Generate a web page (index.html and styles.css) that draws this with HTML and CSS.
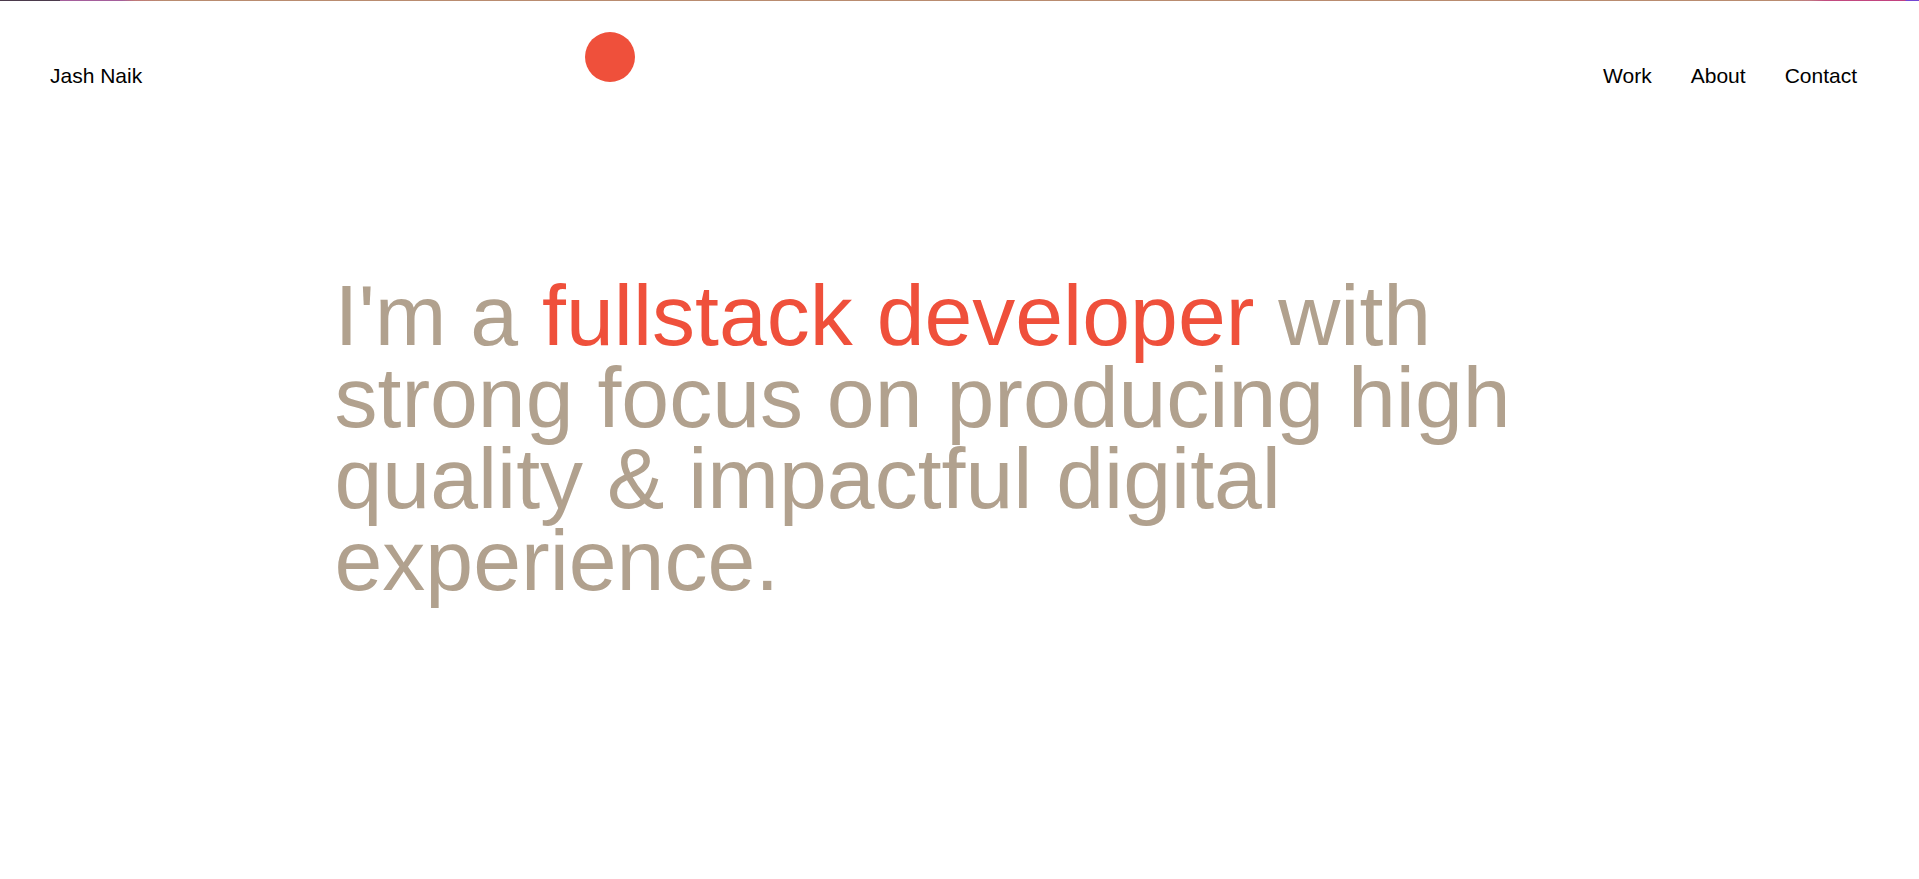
FILE: index.html
```html
<!DOCTYPE html>
<html lang="en">
<head>
<meta charset="utf-8">
<title>Jash Naik</title>
<link rel="stylesheet" href="styles.css">
</head>
<body>
<div class="progress"></div>
<header class="header">
  <a class="brand" href="#">Jash Naik</a>
  <nav class="nav">
    <a href="#">Work</a>
    <a href="#">About</a>
    <a href="#">Contact</a>
  </nav>
</header>
<div class="cursor"></div>
<main class="hero">
  <h1 class="headline">I'm a <span class="accent">fullstack developer</span> with strong focus on producing high quality &amp; impactful digital experience.</h1>
</main>
</body>
</html>
```
FILE: styles.css
```css
* { box-sizing: border-box; }
html, body { margin: 0; padding: 0; background: #ffffff; }
body {
  font-family: "Liberation Sans", Arial, sans-serif;
  color: #000;
  position: relative;
  min-height: 879px;
}
.progress {
  height: 1px;
  background: linear-gradient(to right,
    #4b3a4c 0px, #4b3a4c 60px,
    #a55f9c 60px, #a55f9c 122px,
    #c07a78 135px, #b98c70 165px,
    #b98c70 1786px,
    #c07a82 1810px, #c24c80 1825px,
    #c2407f 1905px, #7346d2 1906px, #7346d2 100%);
}
.header {
  display: flex;
  justify-content: space-between;
  align-items: center;
  padding: 63px 62px 0 50px;
  font-size: 21px;
  line-height: 24px;
}
.header a { color: #000; text-decoration: none; }
.nav { display: flex; gap: 39px; }
.cursor {
  position: absolute;
  left: 585px;
  top: 32px;
  width: 50px;
  height: 50px;
  border-radius: 50%;
  background: #ef503b;
}
.hero {
  max-width: 1250px;
  margin: 187px auto 0;
}
.headline {
  margin: 0;
  font-weight: 400;
  font-size: 86px;
  line-height: 0.95;
  color: #b1a18e;
}
.accent { color: #ef503b; }
```
